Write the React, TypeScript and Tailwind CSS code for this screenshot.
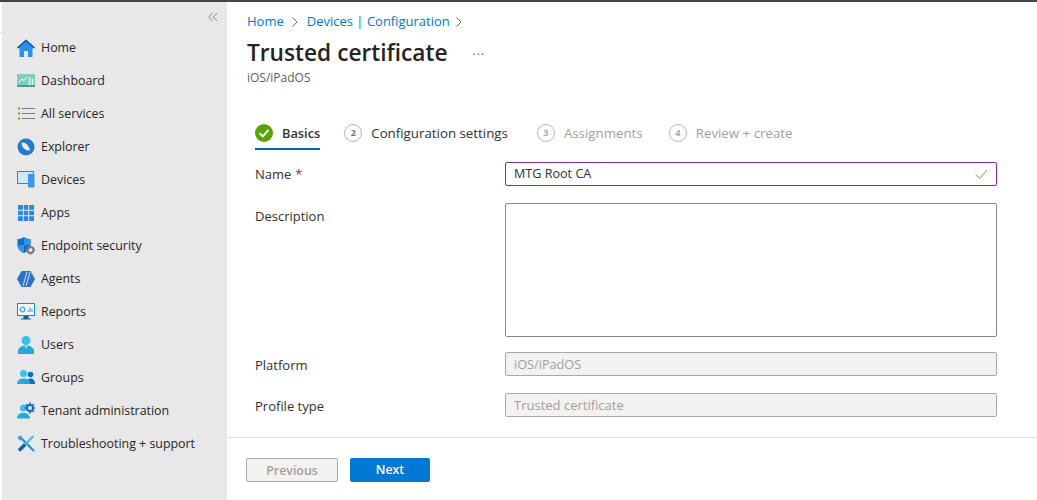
import { ReactNode } from 'react'

const HomeIcon = () => (
  <svg width="18" height="18" viewBox="0 0 18 18">
    <path d="M0 8.500 9 .5l9 8-1 .8H15.500V18H11v-6H7v6H2.500V9.300H1z" fill="#2f8fe8" />
    <path d="M0 8.500 9 .5l9 8-1 1L9 2.600 1 9.500z" fill="#0a5fb4" />
    <rect x="7" y="12" width="4" height="6" fill="#d9ebfa" />
  </svg>
)

const DashboardIcon = () => (
  <svg width="18" height="18" viewBox="0 0 18 18">
    <rect x="0" y="2" width="18" height="11" fill="#7fcfbb" />
    <rect x="0" y="13" width="18" height="2" fill="#3aa68f" />
    <path d="M2 10l3-3 2 1.500L10 5" stroke="#fff" strokeWidth="1" fill="none" />
    <path d="M12.500 5v8M15.500 7v6" stroke="#e6f6f2" strokeWidth="1.600" />
  </svg>
)

const ServicesIcon = () => (
  <svg width="18" height="18" viewBox="0 0 18 18">
    <path d="M4.500 3.500H18M4.500 8.500H18M4.500 13.500H18" stroke="#7f7f7f" strokeWidth="1.200" />
    <rect x="1" y="2.500" width="2" height="2" fill="#6fa72f" />
    <rect x="1" y="7.500" width="2" height="2" fill="#6fa72f" />
    <rect x="1" y="12.500" width="2" height="2" fill="#6fa72f" />
  </svg>
)

const ExplorerIcon = () => (
  <svg width="18" height="18" viewBox="0 0 18 18">
    <circle cx="9" cy="9" r="8.500" fill="#2a78c9" />
    <path d="M4.500 5c3-1.500 7 1.500 8.500 7.500C9 13 5 10 4.500 5z" fill="#e8eef4" />
  </svg>
)

const DevicesIcon = () => (
  <svg width="18" height="18" viewBox="0 0 18 18">
    <rect x="0.500" y="0.500" width="16" height="12" fill="#cfe8fa" stroke="#2a84d8" />
    <rect x="11" y="3" width="6.500" height="13.500" rx="1" fill="#3f96e8" />
  </svg>
)

const AppsIcon = () => (
  <svg width="18" height="18" viewBox="0 0 18 18">
    <rect x="1" y="1" width="16" height="16" fill="#2f86dc" />
    <path d="M6.300 1v16M11.700 1v16M1 6.300h16M1 11.700h16" stroke="#e8e8e8" strokeWidth="1" />
  </svg>
)

const SecurityIcon = () => (
  <svg width="18" height="18" viewBox="0 0 18 18">
    <path d="M7 0c2 1.500 4 2 6.500 2v6c0 4-3 6.500-6.500 8C3.500 14.500.5 12 .5 8V2C3 2 5 1.500 7 0z" fill="#0f6fc6" />
    <path d="M7 0c2 1.500 4 2 6.500 2v6H7zM7 8v8C3.500 14.500.5 12 .5 8z" fill="#2f94ea" />
    <circle cx="13.500" cy="13" r="3" fill="none" stroke="#7a7a7a" strokeWidth="2" />
    <path d="M13.500 8.500v1.500M13.500 16v1.500M9 13h1.500M16.500 13H18" stroke="#7a7a7a" strokeWidth="1.300" />
  </svg>
)

const AgentsIcon = () => (
  <svg width="18" height="18" viewBox="0 0 18 18">
    <path d="M4.500 1h9L18 9l-4.500 8h-9L0 9z" fill="#2f72c8" />
    <path d="M6 16 10 2M9 16l4-14" stroke="#e6f0fa" strokeWidth="0.900" />
  </svg>
)

const ReportsIcon = () => (
  <svg width="18" height="18" viewBox="0 0 18 18">
    <rect x="0.500" y="0.500" width="17" height="12" fill="#f2f8fd" stroke="#1f84dc" />
    <path d="M6.500 13h5v2.500h2.500v1H4v-1h2.500z" fill="#14619f" />
    <circle cx="5.500" cy="6.500" r="2.300" fill="none" stroke="#2fb3e0" strokeWidth="1.300" />
    <path d="M11 9V7M13 9V4.500M15 9V6" stroke="#4a90c8" strokeWidth="1" />
  </svg>
)

const UsersIcon = () => (
  <svg width="18" height="18" viewBox="0 0 18 18">
    <circle cx="9" cy="4.500" r="4.500" fill="#37c2e8" />
    <path d="M1 18v-3c0-3 3-5.500 8-5.500s8 2.500 8 5.500v3z" fill="#27a9d8" />
    <path d="M8 10h2l-1 3z" fill="#d9f2fa" />
  </svg>
)

const GroupsIcon = () => (
  <svg width="18" height="18" viewBox="0 0 18 18">
    <circle cx="13.500" cy="5.500" r="2.800" fill="#0a6fcf" />
    <path d="M9.500 15c0-3.500 1.500-5.500 4-5.500s4.500 2 4.500 5.500z" fill="#0a6fcf" />
    <circle cx="6.500" cy="4.500" r="3.500" fill="#37c2e8" />
    <path d="M0 15c0-3.500 2.500-5.500 6.500-5.500S13 11.500 13 15z" fill="#27a9d8" />
  </svg>
)

const TenantIcon = () => (
  <svg width="18" height="18" viewBox="0 0 18 18">
    <circle cx="6.500" cy="6" r="3.500" fill="#37c2e8" />
    <path d="M0 16.500c0-3.500 2.500-5.500 6.500-5.500s6.500 2 6.500 5.500z" fill="#27a9d8" />
    <circle cx="13" cy="6" r="3" fill="none" stroke="#0a6fcf" strokeWidth="2" />
    <path d="M13 .5v2M13 9.500v2M7.500 6h2M16.500 6h1.500M9.200 2.200l1.300 1.300M15.500 8.500l1.300 1.300M16.800 2.200l-1.300 1.300" stroke="#0a6fcf" strokeWidth="1.600" />
  </svg>
)

const SupportIcon = () => (
  <svg width="18" height="18" viewBox="0 0 18 18">
    <path d="M3 2l14 14" stroke="#2b8fd8" strokeWidth="2.200" />
    <path d="M16.500 1l-9 9" stroke="#37c2e8" strokeWidth="2.200" />
    <path d="M8 9.500l-6 6" stroke="#0f5fae" strokeWidth="3.500" />
    <path d="M1 1.500 4 .5l2 3-2 2-3-1.500z" fill="#4f9bd8" />
  </svg>
)

const navItems: { label: string; icon: ReactNode }[] = [
  { label: 'Home', icon: <HomeIcon /> },
  { label: 'Dashboard', icon: <DashboardIcon /> },
  { label: 'All services', icon: <ServicesIcon /> },
  { label: 'Explorer', icon: <ExplorerIcon /> },
  { label: 'Devices', icon: <DevicesIcon /> },
  { label: 'Apps', icon: <AppsIcon /> },
  { label: 'Endpoint security', icon: <SecurityIcon /> },
  { label: 'Agents', icon: <AgentsIcon /> },
  { label: 'Reports', icon: <ReportsIcon /> },
  { label: 'Users', icon: <UsersIcon /> },
  { label: 'Groups', icon: <GroupsIcon /> },
  { label: 'Tenant administration', icon: <TenantIcon /> },
  { label: 'Troubleshooting + support', icon: <SupportIcon /> },
]

const Chevron = () => (
  <svg width="8" height="12" viewBox="0 0 8 12" fill="none" stroke="#6b6b6b" strokeWidth="1">
    <path d="M1.500 1.500 6 6l-4.500 4.500" />
  </svg>
)

function Step({ n, label, active }: { n: number; label: string; active?: boolean }) {
  return (
    <div className="flex items-center gap-[9px]">
      <span
        className={`flex h-[18px] w-[18px] items-center justify-center rounded-full border border-[#b5b5b5] text-[9px] font-bold ${
          active ? 'text-[#7a7a7a]' : 'text-[#a8a8a8]'
        }`}
      >
        {n}
      </span>
      <span className={`pt-[2px] text-[13.300px] leading-none ${active ? 'text-[#323130]' : 'text-[#a19f9d]'}`}>{label}</span>
    </div>
  )
}

export default function App() {
  return (
    <div className="flex h-[500px] w-[1037px] flex-col overflow-hidden bg-white font-['Open_Sans','Noto_Sans',sans-serif] text-[#323130]">
      <div className="h-[2px] shrink-0 bg-[#444444]" />
      <div className="flex min-h-0 flex-1">
        <div className="w-[2px] shrink-0">
          <div className="h-[31px] border-b border-[#e1dfdd]" />
        </div>
        <div className="w-[225px] shrink-0 bg-[#e8e8e8]">
          <div className="flex h-[29px] items-center justify-end pr-[9px] text-[#7a7a7a]">
            <svg width="10" height="10" viewBox="0 0 10 10" fill="none" stroke="#7d7d7d" strokeWidth="0.900">
              <path d="M4.500 1 .8 5l3.700 4M9 1 5.300 5 9 9" />
            </svg>
          </div>
          <nav className="flex flex-col">
            {navItems.map((item) => (
              <div key={item.label} className="flex h-[33px] items-center gap-[6px] pl-[15px] text-[12.400px] leading-none text-[#262626]">
                <span className="flex w-[18px] shrink-0 justify-center">{item.icon}</span>
                <span className="pt-[2px]">{item.label}</span>
              </div>
            ))}
          </nav>
        </div>

        <div className="flex min-w-0 flex-1 flex-col">
          <div className="pl-[20px]">
            <div className="flex h-[38px] items-center pt-[1px] text-[13px] text-[#0078d4]">
              <span>Home</span>
              <span className="mx-[7.500px] flex"><Chevron /></span>
              <span>Devices | Configuration</span>
              <span className="ml-[5px] flex"><Chevron /></span>
            </div>
            <div className="flex h-[26px] items-center">
              <h1 className="text-[22.700px] leading-none font-semibold text-[#252423]">Trusted certificate</h1>
              <span className="mb-[4px] ml-[25px] text-[12px] leading-none tracking-[1px] text-[#605e5c]">...</span>
            </div>
            <div className="mt-[4px] text-[12px] leading-[16px] text-[#605e5c]">iOS/iPadOS</div>
          </div>

          <div className="flex-1 pl-[28px]">
            <div className="mt-[29px] flex h-[35px] items-start gap-[24px]">
              <div className="flex h-[35px] items-start gap-[9px] border-b-2 border-[#0067b8] pt-[9px]">
                <svg width="18" height="18" viewBox="0 0 18 18">
                  <circle cx="9" cy="9" r="9" fill="#57a300" />
                  <path d="M4.500 9.200 7.800 12.300 13.500 6" stroke="#fff" strokeWidth="2" fill="none" />
                </svg>
                <span className="text-[12.800px] leading-[18px] font-semibold text-[#323130]">Basics</span>
              </div>
              <div className="flex items-start pt-[9px]">
                <Step n={2} label="Configuration settings" active />
                <div className="ml-[29px]"><Step n={3} label="Assignments" /></div>
                <div className="ml-[26px]"><Step n={4} label="Review + create" /></div>
              </div>
            </div>

            <div className="mt-[12px] grid grid-cols-[250px_492px] text-[13px] leading-none">
              <div className="flex h-[24px] items-center">
                Name <span className="ml-[4px] text-[#a4262c]">*</span>
              </div>
              <div className="flex h-[24px] items-center justify-between rounded-[2px] border border-[#8a2da5] px-[8px]">
                <span className="text-[12.600px]">MTG Root CA</span>
                <svg width="13" height="11" viewBox="0 0 13 11" fill="none" stroke="#6bb02e" strokeWidth="1">
                  <path d="M.8 5.500 4.500 9.500 12 1" />
                </svg>
              </div>

              <div className="mt-[17px] pt-[7px]">Description</div>
              <div className="mt-[17px] h-[134px] rounded-[2px] border border-[#8a8886] bg-white" />

              <div className="mt-[15px] flex h-[24px] items-center pt-[2px]">Platform</div>
              <div className="mt-[15px] flex h-[24px] items-center rounded-[2px] border border-[#a8a8a8] bg-[#f3f2f1] px-[8px] text-[12.700px] text-[#a19f9d]">iOS/iPadOS</div>

              <div className="mt-[17px] flex h-[24px] items-center pt-[2px]">Profile type</div>
              <div className="mt-[17px] flex h-[24px] items-center rounded-[2px] border border-[#a8a8a8] bg-[#f3f2f1] px-[8px] text-[#a19f9d]">Trusted certificate</div>
            </div>
          </div>

          <div className="flex h-[63px] shrink-0 items-start gap-[12px] border-t border-[#e1dfdd] pt-[20px] pl-[19px]">
            <button className="h-[24px] w-[92px] rounded-[2px] border border-[#a8a8a8] bg-[#f3f2f1] pt-[2px] text-[12.400px] font-semibold text-[#a19f9d]">Previous</button>
            <button className="h-[24px] w-[80px] rounded-[2px] bg-[#0078d4] pt-[1px] text-[12.400px] font-semibold text-white">Next</button>
          </div>
        </div>
      </div>
    </div>
  )
}
